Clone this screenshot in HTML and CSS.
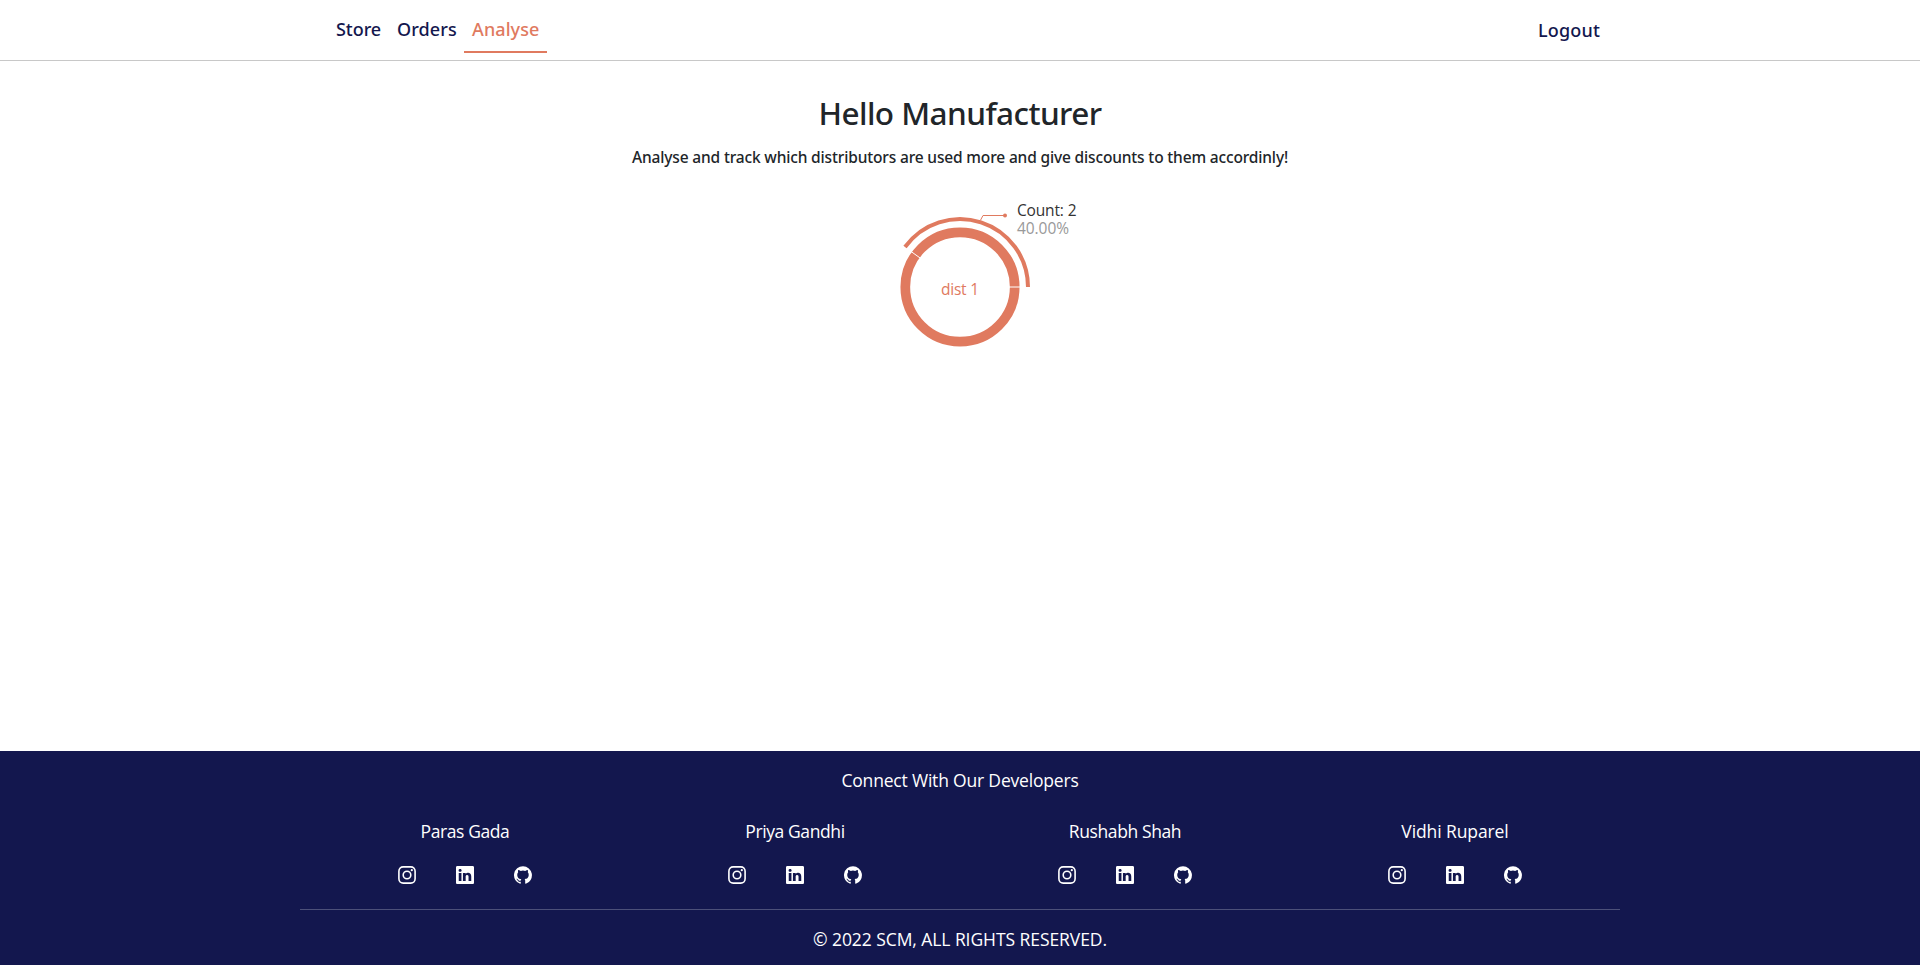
FILE: index.html
```html
<!DOCTYPE html>
<html lang="en">
<head>
<meta charset="utf-8">
<title>Supply Chain Management</title>
<link rel="stylesheet" href="styles.css">
</head>
<body>
<svg class="sprite" aria-hidden="true">
  <symbol id="instagram" viewBox="0 0 18 18">
    <rect x=".9" y=".9" width="16.2" height="16.2" rx="4.3" fill="none" stroke="currentColor" stroke-width="1.6"/>
    <circle cx="9" cy="9" r="3.8" fill="none" stroke="currentColor" stroke-width="1.6"/>
    <circle cx="13.8" cy="4.2" r="1.1" fill="currentColor"/>
  </symbol>
  <symbol id="linkedin" viewBox="0 0 24 24">
    <path fill="currentColor" d="M22.23 0H1.77C.8 0 0 .77 0 1.72v20.56C0 23.23.8 24 1.77 24h20.46c.98 0 1.77-.77 1.77-1.72V1.72C24 .77 23.2 0 22.23 0zM7.27 20.1H3.65V9.24h3.62V20.1zM5.47 7.76h-.03c-1.22 0-2-.83-2-1.87 0-1.06.8-1.87 2.05-1.87 1.24 0 2 .8 2.02 1.87 0 1.04-.78 1.87-2.05 1.87zM20.34 20.1h-3.63v-5.8c0-1.45-.52-2.45-1.83-2.45-1 0-1.6.67-1.87 1.32-.1.23-.11.55-.11.88v6.05H9.28s.05-9.82 0-10.84h3.63v1.54a3.6 3.6 0 0 1 3.26-1.8c2.39 0 4.18 1.56 4.18 4.89v6.21z"/>
  </symbol>
  <symbol id="github" viewBox="0 0 24 24">
    <path fill="currentColor" d="M12 .3a12 12 0 0 0-3.8 23.38c.6.12.83-.26.83-.57L9 21.07c-3.34.72-4.04-1.61-4.04-1.61-.55-1.39-1.34-1.76-1.34-1.76-1.08-.74.09-.73.09-.73 1.2.09 1.83 1.24 1.83 1.24 1.08 1.83 2.81 1.3 3.5 1 .1-.78.42-1.31.76-1.61-2.67-.3-5.47-1.33-5.47-5.93 0-1.31.47-2.38 1.24-3.22-.14-.3-.54-1.52.1-3.18 0 0 1-.32 3.3 1.23a11.5 11.5 0 0 1 6 0c2.28-1.55 3.29-1.23 3.29-1.23.64 1.66.24 2.88.12 3.18a4.65 4.65 0 0 1 1.23 3.22c0 4.61-2.8 5.63-5.48 5.92.42.36.81 1.1.81 2.22l-.01 3.29c0 .31.2.69.82.57A12 12 0 0 0 12 .3"/>
  </symbol>
</svg>

<header class="navbar">
  <nav class="navbar-inner">
    <a class="nav-link store">Store</a>
    <a class="nav-link orders">Orders</a>
    <a class="nav-link analyse active">Analyse</a>
    <a class="nav-link logout">Logout</a>
  </nav>
</header>

<main>
  <h1>Hello Manufacturer</h1>
  <p class="lead">Analyse and track which distributors are used more and give discounts to them accordinly!</p>
  <svg class="chart" width="400" height="180" viewBox="760 187 400 180">
    <g fill="none" stroke="#e07a5f">
      <circle cx="960" cy="287" r="54.7" stroke-width="9.7"/>
      <path d="M1028 287A68 68 0 0 0 904.99 247.03" stroke-width="4"/>
      <path d="M980.4 220.4L983 215.5H1005"/>
    </g>
    <path d="M1009 287H1021M920.4 258.2L909.8 250.6" stroke="#fff" fill="none"/>
    <circle cx="1005" cy="215.5" r="2" fill="#e07a5f"/>
    <text x="960" y="295" text-anchor="middle" fill="#e07a5f" textLength="38">dist 1</text>
    <text x="1017" y="216" fill="#333" textLength="59.5">Count: 2</text>
    <text x="1017" y="234" fill="#999" textLength="52">40.00%</text>
  </svg>
</main>

<footer>
  <p class="connect">Connect With Our Developers</p>
  <div class="developers">
    <section class="developer">
      <p>Paras Gada</p>
      <div class="links"><svg><use href="#instagram"/></svg><svg><use href="#linkedin"/></svg><svg><use href="#github"/></svg></div>
    </section>
    <section class="developer">
      <p>Priya Gandhi</p>
      <div class="links"><svg><use href="#instagram"/></svg><svg><use href="#linkedin"/></svg><svg><use href="#github"/></svg></div>
    </section>
    <section class="developer">
      <p>Rushabh Shah</p>
      <div class="links"><svg><use href="#instagram"/></svg><svg><use href="#linkedin"/></svg><svg><use href="#github"/></svg></div>
    </section>
    <section class="developer wide">
      <p>Vidhi Ruparel</p>
      <div class="links"><svg><use href="#instagram"/></svg><svg><use href="#linkedin"/></svg><svg><use href="#github"/></svg></div>
    </section>
  </div>
  <p class="copyright">© 2022 SCM, ALL RIGHTS RESERVED.</p>
</footer>
</body>
</html>
```
FILE: styles.css
```css
* { box-sizing: border-box; }

body {
  margin: 0;
  height: 100vh;
  display: flex;
  flex-direction: column;
  overflow: hidden;
  background: #fff;
  color: #212529;
  font-family: "Open Sans", "Noto Sans", sans-serif;
}

h1, p { margin: 0; }

.sprite { display: none; }

.navbar {
  height: 61px;
  border-bottom: 1px solid #c8c8c8;
}

.navbar-inner {
  display: flex;
  align-items: flex-start;
  width: 1320px;
  margin: 0 auto;
  padding: 8px 12px 0 28px;
}

.nav-link {
  padding: 8px 0 8px 8px;
  color: #13174e;
  font-family: "Noto Sans", sans-serif;
  font-size: 18px;
  font-weight: 500;
  line-height: 27px;
  white-space: nowrap;
}

.store { width: 61px; letter-spacing: -.05px; }
.orders { width: 75px; letter-spacing: .1px; }
.analyse { width: 83px; letter-spacing: .09px; }

.active {
  color: #e07a5f;
  border-bottom: 2px solid #e07a5f;
}

.logout {
  width: 78px;
  margin: 1px 0 0 auto;
  letter-spacing: .19px;
}

main {
  flex: 1;
  display: flex;
  flex-direction: column;
  align-items: center;
  padding-top: 33px;
}

h1 {
  font-family: "Noto Sans", sans-serif;
  font-size: 31.5px;
  font-weight: 500;
  line-height: 38px;
  letter-spacing: -.56px;
}

.lead {
  margin-top: 15px;
  font-family: "Noto Sans", sans-serif;
  font-size: 15.5px;
  font-weight: 500;
  line-height: 20px;
  letter-spacing: -.157px;
}

.chart {
  margin-top: 20px;
  font-size: 15.5px;
}

footer {
  height: 214px;
  padding-top: 16px;
  background: #13174e;
  color: #fff;
  font-size: 17.5px;
  line-height: 27px;
  text-align: center;
}

.connect { letter-spacing: -.187px; }

.developers {
  display: grid;
  grid-template-columns: repeat(4, 1fr);
  width: 1320px;
  height: 116px;
  margin: 0 auto;
  padding-top: 24px;
  border-bottom: 1px solid #4c5079;
}

.developer { letter-spacing: -.4px; }
.wide { letter-spacing: -.1px; }

.links {
  display: flex;
  justify-content: center;
  gap: 40px;
  margin-top: 21px;
}

.links svg { width: 18px; height: 18px; }

.copyright {
  margin-top: 16px;
  letter-spacing: -.07px;
}
```
